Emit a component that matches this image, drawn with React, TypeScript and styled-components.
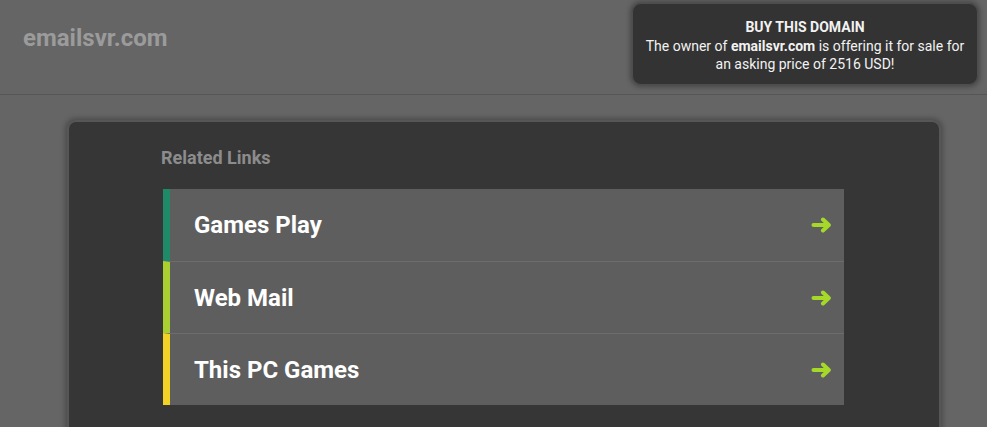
import React from "react";
import styled, { createGlobalStyle } from "styled-components";

const Global = createGlobalStyle`
  html, body { margin: 0; padding: 0; background: #656565; }
  body { font-family: Roboto, "Liberation Sans", Arial, sans-serif; }
  * { box-sizing: border-box; }
`;

const Page = styled.div`
  width: 987px;
  height: 427px;
  overflow: hidden;
  background: #656565;
`;

const Header = styled.header`
  height: 95px;
  border-bottom: 1px solid #565656;
  display: flex;
  justify-content: space-between;
  align-items: flex-start;
  padding: 0 9px 0 23px;
`;

const Logo = styled.div`
  margin-top: 24px;
  font-size: 24px;
  font-weight: 700;
  color: #9b9b9b;
  line-height: 28px;
`;

const BuyBox = styled.div`
  margin-top: 3px;
  width: 346px;
  height: 82px;
  background: #333333;
  border: 1px solid #4d4d4d;
  border-radius: 9px;
  box-shadow: 0 0 5px 2px rgba(0, 0, 0, 0.3);
  color: #f2f2f2;
  text-align: center;
  padding-top: 14px;
  font-size: 14px;
  line-height: 18px;
`;

const BuyTitle = styled.div`
  font-weight: 700;
  margin-bottom: 1px;
`;

const Strong = styled.b`
  font-weight: 700;
`;

const Card = styled.main`
  margin: 25px 46px 0 67px;
  height: 330px;
  background: #363636;
  border: 2px solid #565656;
  border-radius: 9px;
  box-shadow: 0 0 5px 2px rgba(0, 0, 0, 0.25);
  padding: 25px 0 0 92px;
`;

const Heading = styled.h2`
  margin: 0 0 20px;
  font-size: 18px;
  font-weight: 700;
  line-height: 22px;
  color: #8c8c8c;
`;

const List = styled.ul`
  list-style: none;
  margin: 0 0 0 2px;
  padding: 0;
  width: 681px;
`;

const Row = styled.li<{ $accent: string }>`
  height: 72px;
  display: flex;
  align-items: center;
  justify-content: space-between;
  background: #5e5e5e;
  border-left: 7px solid ${(p) => p.$accent};
  border-top: 1px solid #6c6c6c;
  padding: 0 12px 0 24px;
  &:first-child { border-top: none; }
`;

const Label = styled.span`
  font-size: 24px;
  font-weight: 700;
  color: #ffffff;
`;

const Arrow = () => (
  <svg width="21" height="16" viewBox="0 0 21 16">
    <path
      d="M2.5 8H17.5M12 2.5L17.8 8L12 13.5"
      fill="none"
      stroke="#a6d82a"
      strokeWidth="4"
      strokeLinecap="round"
      strokeLinejoin="round"
    />
  </svg>
);

const links = [
  { label: "Games Play", accent: "#1e8a68" },
  { label: "Web Mail", accent: "#a9cf30" },
  { label: "This PC Games", accent: "#f3d226" },
];

export default function App() {
  return (
    <Page>
      <Global />
      <Header>
        <Logo>emailsvr.com</Logo>
        <BuyBox>
          <BuyTitle>BUY THIS DOMAIN</BuyTitle>
          <div>
            The owner of <Strong>emailsvr.com</Strong> is offering it for sale for
          </div>
          <div>an asking price of 2516 USD!</div>
        </BuyBox>
      </Header>
      <Card>
        <Heading>Related Links</Heading>
        <List>
          {links.map((l) => (
            <Row key={l.label} $accent={l.accent}>
              <Label>{l.label}</Label>
              <Arrow />
            </Row>
          ))}
        </List>
      </Card>
    </Page>
  );
}
